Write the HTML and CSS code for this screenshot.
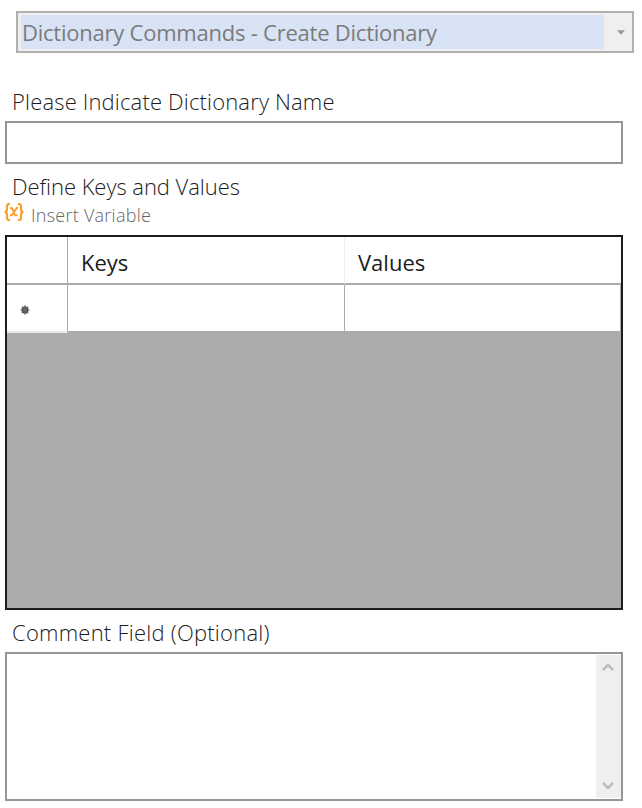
FILE: index.html
```html
<!DOCTYPE html>
<html lang="en">
<head>
<meta charset="utf-8">
<title>Create Dictionary</title>
<link rel="stylesheet" href="styles.css">
</head>
<body>
<main class="form">
  <div class="select">
    <span class="select-value">Dictionary Commands - Create Dictionary</span>
    <svg class="select-arrow" width="8" height="5" viewBox="0 0 8 5"><path d="M0 .3h8L4 4.7z" fill="#999"/></svg>
  </div>
  <label class="label label-name">Please Indicate Dictionary Name</label>
  <div class="input"></div>
  <label class="label label-keys">Define Keys and Values</label>
  <div class="insert">
    <svg class="variable-icon" width="20" height="18" viewBox="0 0 20 18" fill="none" stroke="#fb9e2b" stroke-width="2.200">
      <path d="M6 1H5Q3 1 3 3v3.5Q3 8.7.7 9 3 9.300 3 11.500V15q0 2 2 2h1M14 1h1q2 0 2 2v3.500q0 2.200 2.300 2.500Q17 9.300 17 11.500V15q0 2-2 2h-1"/>
      <path d="M6 5.300h2.200l3 7h2.300M14 5h-1.200L7.700 12.300H6" stroke-width="2"/>
    </svg>
    <span>Insert Variable</span>
  </div>
  <div class="grid">
    <div class="row head">
      <div class="cell"></div>
      <div class="cell">Keys</div>
      <div class="cell">Values</div>
    </div>
    <div class="row entry">
      <div class="cell marker"><svg width="10" height="10" viewBox="0 0 10 10"><circle cx="5" cy="5" r="3.500" fill="#444"/><path d="M5 .3v9.400M.5 5h9M1.700 1.700l6.600 6.600M8.300 1.700L1.700 8.300" stroke="#666" stroke-width="1.200"/></svg></div>
      <div class="cell"></div>
      <div class="cell"></div>
    </div>
  </div>
  <label class="label label-comment">Comment Field (Optional)</label>
  <div class="comment">
    <div class="scrollbar">
      <svg width="12" height="10" viewBox="0 0 12 10"><path d="M1 8l5-5 5 5" fill="none" stroke="#bdbdbd" stroke-width="2.500"/></svg>
      <svg width="12" height="10" viewBox="0 0 12 10"><path d="M1 2l5 5 5-5" fill="none" stroke="#bdbdbd" stroke-width="2.500"/></svg>
    </div>
  </div>
</main>
</body>
</html>
```
FILE: styles.css
```css
* { box-sizing: border-box; }
body {
  margin: 0;
  background: #fff;
  color: #1c1c1c;
  font-family: "Open Sans", "Noto Sans", sans-serif;
  font-size: 22px;
}
.form { width: 642px; height: 808px; padding: 11px 0 0 5px; overflow: hidden; }
.select {
  display: flex;
  align-items: center;
  width: 618px;
  height: 42px;
  margin-left: 11px;
  padding: 0 7px 0 3px;
  border: 2px solid #b0b0b0;
  background: #efefef;
  color: #7b7b7b;
}
.select-value {
  width: 583px;
  height: 34px;
  padding-left: 1px;
  background: #d8e3f5;
  line-height: 35px;
  letter-spacing: -0.23px;
  white-space: nowrap;
}
.select-arrow { margin-left: auto; flex: none; }
.label { display: block; padding-left: 7px; font-weight: 300; white-space: nowrap; }
.label-name { height: 68px; padding-top: 34px; line-height: 29px; letter-spacing: 0.16px; }
.input { width: 618px; height: 43px; border: 2px solid #969696; }
.label-keys { height: 38px; padding-top: 8px; line-height: 29px; letter-spacing: -0.05px; }
.insert {
  display: flex;
  align-items: center;
  gap: 7px;
  height: 33px;
  padding-bottom: 8px;
  margin-left: -1px;
  color: #666;
  font-size: 18px;
  font-weight: 300;
  letter-spacing: 0.25px;
}
.variable-icon { flex: none; margin-top: -5px; }
.grid { width: 618px; height: 375px; border: 2px solid #1c1c1c; background: #ababab; }
.row { display: grid; grid-template-columns: 61px 277px 276px; height: 48px; background: #fff; }
.cell { display: flex; align-items: center; border-right: 1px solid #aaa; border-bottom: 2px solid #aaa; padding: 3px 0 0 13px; }
.head .cell:nth-child(2) { border-right-color: #eee; }
.head .cell:last-child { border-right: 0; }
.entry .marker { border-bottom-color: #e8e8e8; }
.label-comment { height: 42px; padding-top: 7px; line-height: 30px; letter-spacing: 0.23px; }
.comment { display: flex; justify-content: flex-end; width: 618px; height: 149px; padding: 1px 0 1px 1px; border: 2px solid #969696; }
.scrollbar {
  display: flex;
  flex-direction: column;
  align-items: center;
  justify-content: space-between;
  width: 25px;
  padding: 7px 1px 7px 0;
  background: #efefef;
}
```
